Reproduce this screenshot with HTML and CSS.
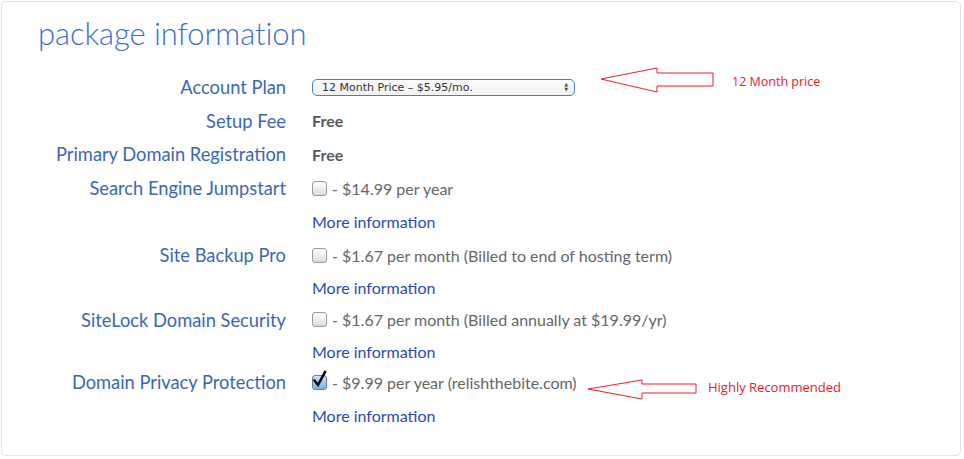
FILE: index.html
```html
<!DOCTYPE html>
<html>
<head>
<meta charset="utf-8">
<link rel="stylesheet" href="styles.css">
</head>
<body>
<div class="panel">
  <h1 class="title">package information</h1>
  <div class="form">
    <div class="label r34">Account Plan</div>
    <div class="value r34">
      <div class="select"><span>12 Month Price – $5.95/mo.</span><span class="spin">▲<br>▼</span></div>
    </div>

    <div class="label r33">Setup Fee</div>
    <div class="value r33"><span class="strong">Free</span></div>

    <div class="label r34">Primary Domain Registration</div>
    <div class="value r34"><span class="strong">Free</span></div>

    <div class="label r34">Search Engine Jumpstart</div>
    <div class="value r34"><span class="cb"></span><span class="txt">- $14.99 per year</span></div>
    <div class="label r33"></div>
    <div class="value r33"><a class="more">More information</a></div>

    <div class="label r34">Site Backup Pro</div>
    <div class="value r34"><span class="cb"></span><span class="txt">- $1.67 per month (Billed to end of hosting term)</span></div>
    <div class="label r31"></div>
    <div class="value r31"><a class="more">More information</a></div>

    <div class="label r33">SiteLock Domain Security</div>
    <div class="value r33"><span class="cb"></span><span class="txt">- $1.67 per month (Billed annually at $19.99/yr)</span></div>
    <div class="label r30"></div>
    <div class="value r30"><a class="more">More information</a></div>

    <div class="label r32">Domain Privacy Protection</div>
    <div class="value r32"><span class="cb checked"><svg width="18" height="20" viewBox="0 0 18 20"><path d="M3.5 11.5 L7 16 L14 3" fill="none" stroke="#0d0d0d" stroke-width="2.6" stroke-linecap="square"/></svg></span><span class="txt">- $9.99 per year (relishthebite.com)</span></div>
    <div class="label r34"></div>
    <div class="value r34"><a class="more">More information</a></div>
  </div>

  <div class="note note1">
    <svg class="arrow" width="116" height="28" viewBox="0 0 116 28"><polygon points="1,12 57,1 57,6 113,6 113,19 57,19 57,25" fill="#fff" stroke="#e8202a" stroke-width="1"/></svg>
    <span class="note-text">12 Month price</span>
  </div>
  <div class="note note2">
    <svg class="arrow" width="112" height="24" viewBox="0 0 112 24"><polygon points="1,10 55,1 55,5 109,5 109,14 55,14 55,20" fill="#fff" stroke="#e8202a" stroke-width="1"/></svg>
    <span class="note-text">Highly Recommended</span>
  </div>
</div>
</body>
</html>
```
FILE: styles.css
```css
html, body {
  margin: 0;
  padding: 0;
  background: #ffffff;
}

.panel {
  position: relative;
  margin: 1px 0 0 1px;
  width: 960px;
  height: 455px;
  box-sizing: border-box;
  border: 1px solid #d9e5f2;
  border-radius: 5px;
  padding: 10px 0 0 36px;
  font-family: Lato, "Open Sans", sans-serif;
}

.title {
  margin: 0;
  font-family: Lato, sans-serif;
  font-weight: 300;
  font-size: 31px;
  line-height: 42px;
  color: #3b6fcb;
  letter-spacing: -0.1px;
}

.form {
  margin-top: 16px;
  display: grid;
  grid-template-columns: 248px auto;
  column-gap: 26px;
}

.r34 { height: 34px; }
.r33 { height: 33px; }
.r32 { height: 32px; }
.r31 { height: 31px; }
.r30 { height: 30px; }

.label {
  display: flex;
  align-items: center;
  justify-content: flex-end;
  font-size: 18.3px;
  color: #3a67b5;
  white-space: nowrap;
}

.value {
  display: flex;
  align-items: center;
  font-size: 16px;
  color: #666666;
  white-space: nowrap;
}

.select {
  width: 263px;
  height: 17px;
  box-sizing: border-box;
  border: 1px solid #4a7cc4;
  border-radius: 5px;
  background: linear-gradient(#fbfbfb, #f1f1f1);
  display: flex;
  align-items: center;
  justify-content: space-between;
  padding: 0 6px 0 9px;
  font-family: "DejaVu Sans", sans-serif;
  font-size: 11px;
  color: #333333;
}

.spin {
  font-size: 5px;
  line-height: 5px;
  color: #555;
  text-align: center;
}

.strong {
  font-weight: 700;
  color: #5a5a5a;
}

.cb {
  position: relative;
  display: inline-block;
  width: 13px;
  height: 13px;
  border: 1px solid #9a9a9a;
  border-radius: 3px;
  background: linear-gradient(#ffffff, #dcdcdc);
  margin-right: 5px;
  flex: none;
}

.cb.checked {
  background: linear-gradient(#cfe3fb, #7fb0ea);
  border-color: #5c7fb0;
}

.cb.checked svg {
  position: absolute;
  left: -2px;
  top: -7px;
}

.txt {
  color: #666666;
}

.more {
  color: #2a4bb2;
  text-decoration: none;
  font-size: 16px;
}

.note {
  position: absolute;
  display: flex;
  align-items: center;
}

.note1 {
  left: 598px;
  top: 65px;
}

.note2 {
  left: 585px;
  top: 377px;
}

.arrow {
  display: block;
}

.note-text {
  font-family: "Open Sans", sans-serif;
  font-size: 12.5px;
  color: #e8202a;
}

.note1 .note-text {
  margin-left: 16px;
  margin-top: 0;
}

.note2 .note-text {
  margin-left: 9px;
  margin-top: -9px;
  font-size: 13px;
}
```
